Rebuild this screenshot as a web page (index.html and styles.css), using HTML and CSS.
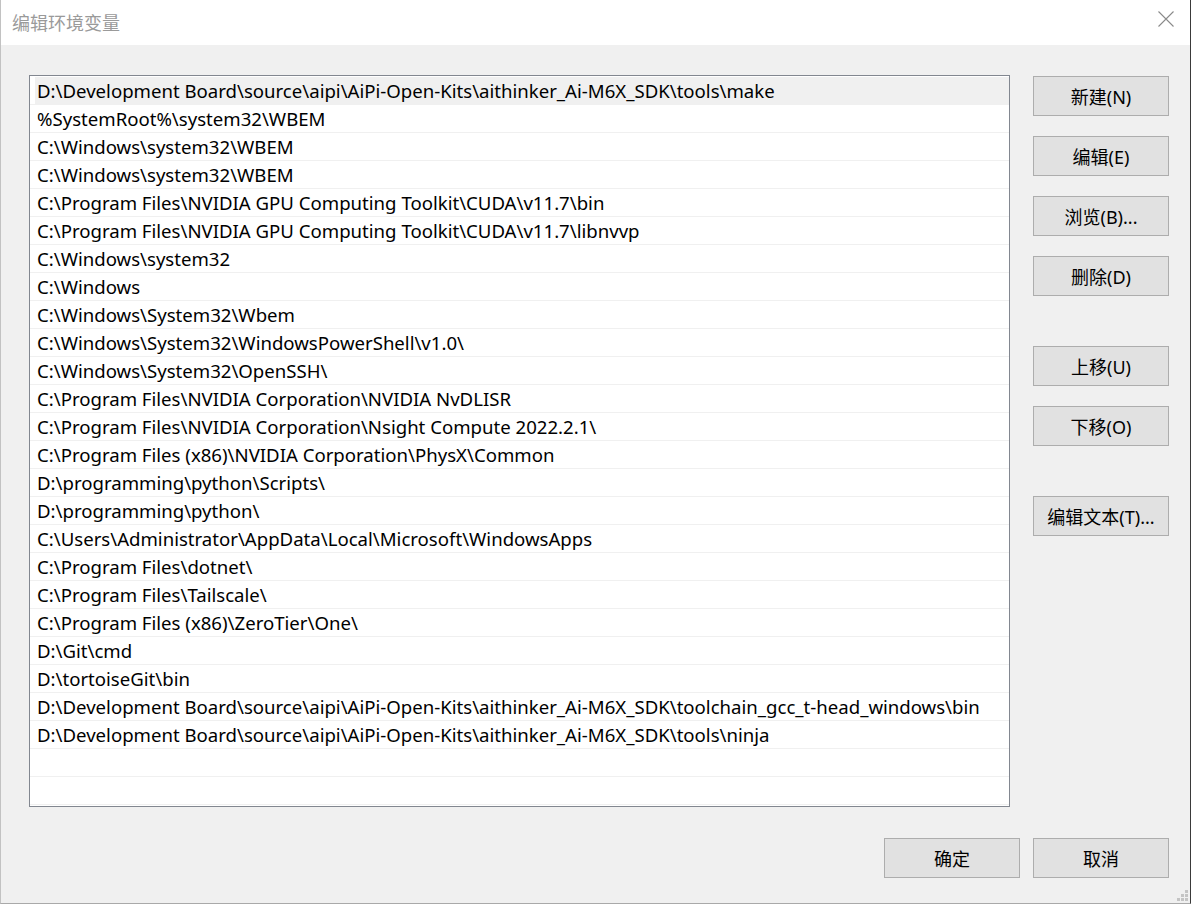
FILE: index.html
```html
<!DOCTYPE html>
<html lang="zh-CN">
<head>
<meta charset="utf-8">
<title>编辑环境变量</title>
<link rel="stylesheet" href="styles.css">
</head>
<body>
<div class="window">
  <div class="titlebar">
    <span class="title">编辑环境变量</span>
    <svg class="close" width="16" height="16" viewBox="0 0 16 16"><path d="M0.5 0.5 L15.5 15.5 M15.5 0.5 L0.5 15.5" stroke="#8a8a8a" stroke-width="1.1" fill="none"/></svg>
  </div>
  <div class="content">
    <div class="main">
      <div class="list">
        <div class="row"><div class="cell selected">D:\Development Board\source\aipi\AiPi-Open-Kits\aithinker_Ai-M6X_SDK\tools\make</div></div>
        <div class="row"><div class="cell">%SystemRoot%\system32\WBEM</div></div>
        <div class="row"><div class="cell">C:\Windows\system32\WBEM</div></div>
        <div class="row"><div class="cell">C:\Windows\system32\WBEM</div></div>
        <div class="row"><div class="cell">C:\Program Files\NVIDIA GPU Computing Toolkit\CUDA\v11.7\bin</div></div>
        <div class="row"><div class="cell">C:\Program Files\NVIDIA GPU Computing Toolkit\CUDA\v11.7\libnvvp</div></div>
        <div class="row"><div class="cell">C:\Windows\system32</div></div>
        <div class="row"><div class="cell">C:\Windows</div></div>
        <div class="row"><div class="cell">C:\Windows\System32\Wbem</div></div>
        <div class="row"><div class="cell">C:\Windows\System32\WindowsPowerShell\v1.0\</div></div>
        <div class="row"><div class="cell">C:\Windows\System32\OpenSSH\</div></div>
        <div class="row"><div class="cell">C:\Program Files\NVIDIA Corporation\NVIDIA NvDLISR</div></div>
        <div class="row"><div class="cell">C:\Program Files\NVIDIA Corporation\Nsight Compute 2022.2.1\</div></div>
        <div class="row"><div class="cell">C:\Program Files (x86)\NVIDIA Corporation\PhysX\Common</div></div>
        <div class="row"><div class="cell">D:\programming\python\Scripts\</div></div>
        <div class="row"><div class="cell">D:\programming\python\</div></div>
        <div class="row"><div class="cell">C:\Users\Administrator\AppData\Local\Microsoft\WindowsApps</div></div>
        <div class="row"><div class="cell">C:\Program Files\dotnet\</div></div>
        <div class="row"><div class="cell">C:\Program Files\Tailscale\</div></div>
        <div class="row"><div class="cell">C:\Program Files (x86)\ZeroTier\One\</div></div>
        <div class="row"><div class="cell">D:\Git\cmd</div></div>
        <div class="row"><div class="cell">D:\tortoiseGit\bin</div></div>
        <div class="row"><div class="cell">D:\Development Board\source\aipi\AiPi-Open-Kits\aithinker_Ai-M6X_SDK\toolchain_gcc_t-head_windows\bin</div></div>
        <div class="row"><div class="cell">D:\Development Board\source\aipi\AiPi-Open-Kits\aithinker_Ai-M6X_SDK\tools\ninja</div></div>
        <div class="row"><div class="cell"></div></div>
        <div class="row"><div class="cell"></div></div>
      </div>
      <div class="side">
        <div class="group">
          <button class="btn">新建(N)</button>
          <button class="btn">编辑(E)</button>
          <button class="btn">浏览(B)...</button>
          <button class="btn">删除(D)</button>
        </div>
        <div class="group">
          <button class="btn">上移(U)</button>
          <button class="btn">下移(O)</button>
        </div>
        <div class="group">
          <button class="btn">编辑文本(T)...</button>
        </div>
      </div>
    </div>
    <div class="footer">
      <button class="btn">确定</button>
      <button class="btn">取消</button>
    </div>
    <svg class="grip" width="12" height="12" viewBox="0 0 12 12">
      <rect x="9" y="0" width="3" height="3" fill="#c4c4c4"/>
      <rect x="5" y="4" width="3" height="3" fill="#c4c4c4"/>
      <rect x="9" y="4" width="3" height="3" fill="#c4c4c4"/>
      <rect x="1" y="8" width="3" height="3" fill="#c4c4c4"/>
      <rect x="5" y="8" width="3" height="3" fill="#c4c4c4"/>
      <rect x="9" y="8" width="3" height="3" fill="#c4c4c4"/>
    </svg>
  </div>
</div>
</body>
</html>
```

FILE: styles.css
```css
html, body {
  margin: 0;
  padding: 0;
  background: #ffffff;
}
body {
  width: 1192px;
  height: 904px;
  overflow: hidden;
  font-family: "Noto Sans", "Noto Sans CJK SC", sans-serif;
}
.window {
  width: 1189px;
  height: 903px;
  border-left: 1px solid #c2c2c2;
  border-right: 1px solid #3a3a3a;
  border-bottom: 1px solid #a9a9a9;
  display: flex;
  flex-direction: column;
  box-sizing: content-box;
  background: #f0f0f0;
}
.titlebar {
  height: 45px;
  background: #ffffff;
  display: flex;
  align-items: center;
  justify-content: space-between;
  padding: 0 16px 0 11px;
  flex: none;
}
.title {
  font-family: "Noto Sans CJK SC", sans-serif;
  font-size: 18px;
  color: #9a9a9a;
  line-height: 1;
  margin-top: -1px;
}
.close {
  display: block;
  margin-top: -7px;
}
.content {
  flex: 1;
  position: relative;
  padding: 30px 0 0 28px;
  display: flex;
  flex-direction: column;
}
.main {
  display: flex;
  gap: 23px;
}
.list {
  width: 979px;
  height: 729px;
  border: 1px solid #828790;
  background: #ffffff;
  padding-top: 1px;
  box-sizing: content-box;
  overflow: hidden;
}
.row {
  height: 27px;
  border-bottom: 1px solid #f0f0f0;
  display: flex;
}
.cell {
  flex: 1;
  margin-left: 5px;
  padding-left: 2px;
  font-family: "Noto Sans", "Noto Sans CJK SC", sans-serif;
  font-size: 18.6px;
  line-height: 27px;
  color: #000000;
  white-space: nowrap;
}
.cell.selected {
  background: #f0f0f0;
}
.side {
  display: flex;
  flex-direction: column;
  gap: 50px;
  padding-top: 1px;
}
.group {
  display: flex;
  flex-direction: column;
  gap: 20px;
}
.btn {
  width: 136px;
  height: 40px;
  background: #e1e1e1;
  border: 1px solid #adadad;
  border-radius: 0;
  margin: 0;
  padding: 0;
  font-family: "Noto Sans", "Noto Sans CJK SC", sans-serif;
  font-size: 18px;
  color: #000000;
  box-sizing: border-box;
}
.footer {
  display: flex;
  justify-content: flex-end;
  gap: 13px;
  padding-right: 21px;
  margin-top: 31px;
}
.grip {
  position: absolute;
  right: 2px;
  bottom: 1px;
}
```
